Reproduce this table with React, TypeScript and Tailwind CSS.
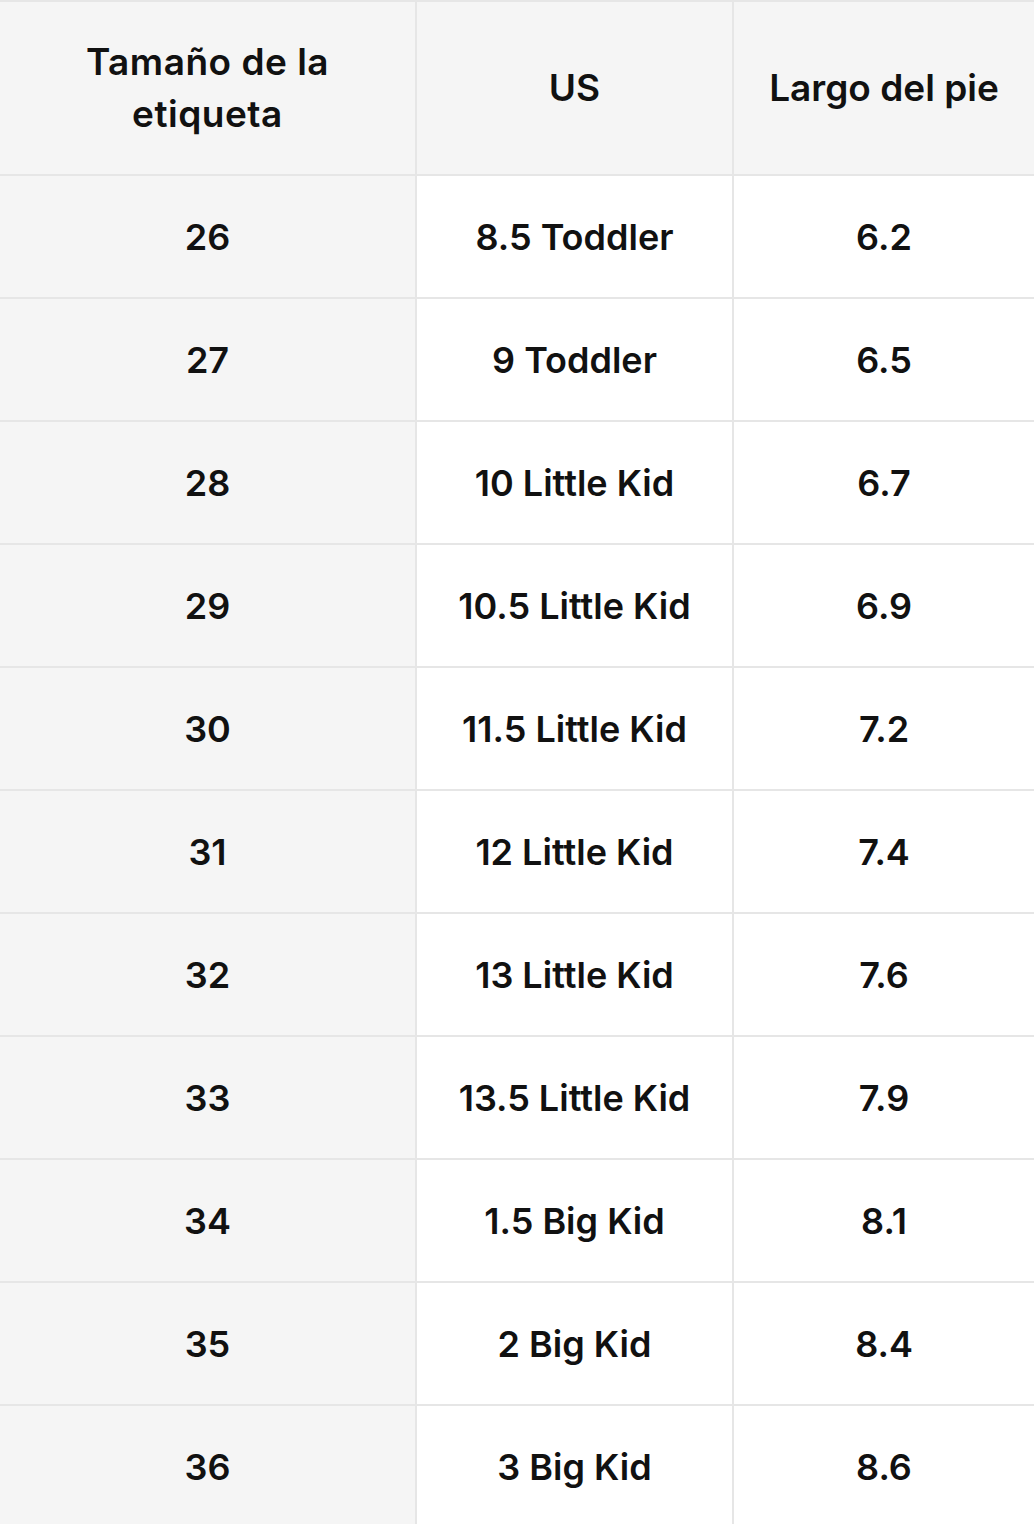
const rows = [
  ['26', '8.5 Toddler', '6.2'],
  ['27', '9 Toddler', '6.5'],
  ['28', '10 Little Kid', '6.7'],
  ['29', '10.5 Little Kid', '6.9'],
  ['30', '11.5 Little Kid', '7.2'],
  ['31', '12 Little Kid', '7.4'],
  ['32', '13 Little Kid', '7.6'],
  ['33', '13.5 Little Kid', '7.9'],
  ['34', '1.5 Big Kid', '8.1'],
  ['35', '2 Big Kid', '8.4'],
  ['36', '3 Big Kid', '8.6'],
];

export default function App() {
  return (
    <div className="w-[1034px] h-[1524px] overflow-hidden bg-white text-[#111] font-semibold text-[36px] font-['Inter','Liberation_Sans',sans-serif]">
      <div className="flex h-[176px] text-[37px] border-t-2 border-b-2 border-[#e6e6e6] bg-[#f5f5f5]">
        <div className="w-[417px] flex items-center justify-center text-center leading-[52px] tracking-[0.5px] border-r-2 border-[#e6e6e6]">
          Tamaño de la<br />etiqueta
        </div>
        <div className="w-[317px] flex items-center justify-center border-r-2 border-[#e6e6e6]">US</div>
        <div className="flex-1 flex items-center justify-center">Largo del pie</div>
      </div>
      {rows.map((r) => (
        <div key={r[0]} className="flex h-[123px] border-b-2 border-[#e6e6e6]">
          <div className="w-[417px] flex items-center justify-center bg-[#f5f5f5] border-r-2 border-[#e6e6e6]">{r[0]}</div>
          <div className="w-[317px] flex items-center justify-center border-r-2 border-[#e6e6e6]">{r[1]}</div>
          <div className="flex-1 flex items-center justify-center">{r[2]}</div>
        </div>
      ))}
    </div>
  );
}
